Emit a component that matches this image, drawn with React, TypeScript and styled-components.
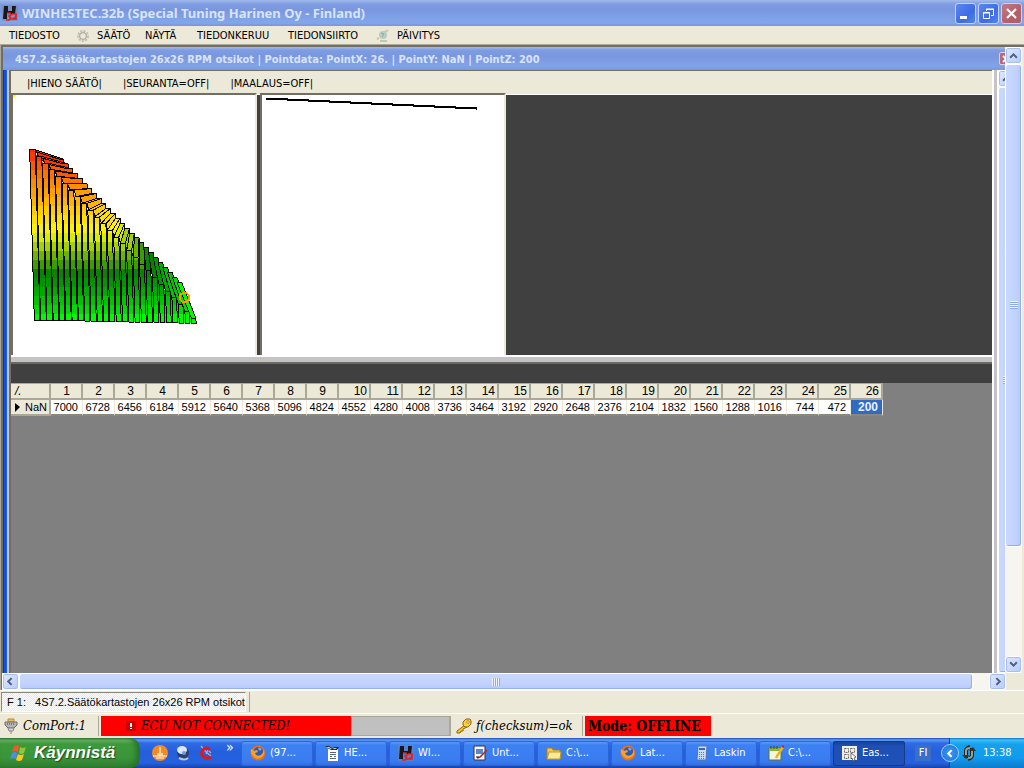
import React from "react";
import styled, { createGlobalStyle, css } from "styled-components";

const tahoma = `"DejaVu Sans Condensed", "DejaVu Sans", sans-serif`;
const trebuchet = `"Noto Sans", "Open Sans", sans-serif`;
const georgia = `"DejaVu Serif Condensed", "DejaVu Serif", serif`;
const arial = `"Liberation Sans", Arial, sans-serif`;

const face = "#ece9d8";
const shade = "#aca899";
const darkShade = "#716f64";

const GlobalStyle = createGlobalStyle`
  *, *::before, *::after { box-sizing: border-box; }
  body { margin: 0; background: ${face}; font: 11px/14px ${tahoma}; color: #000; }
  button { margin: 0; padding: 0; border: 0; background: none; font: inherit; color: inherit; }
  svg { display: block; flex: none; }
`;

const Screen = styled.div`
  display: flex;
  flex-direction: column;
  min-height: 100vh;
  overflow: hidden;
`;

const TitleBar = styled.header`
  display: flex;
  align-items: center;
  gap: 2px;
  height: 26px;
  padding: 0 2px;
  background: linear-gradient(#a2bbec 0, #7f9de2 4px, #7a96df 10px, #80a4e8 20px, #83a6ea 23px, #7b92dc 100%);
`;

const AppTitle = styled.h1`
  flex: 1;
  margin: 0 0 0 2px;
  font: bold 13px/20px ${trebuchet};
  color: #d8e4f8;
  white-space: nowrap;
`;

const CaptionButton = styled.button<{ $danger?: boolean }>`
  display: flex;
  align-items: center;
  justify-content: center;
  width: 21px;
  height: 21px;
  border: 1px solid #c3d2f6;
  border-radius: 3px;
  background: ${(p) =>
    p.$danger
      ? "linear-gradient(135deg, #c07a86, #b3606a 60%, #a8626e)"
      : "linear-gradient(135deg, #5d87f0, #3d6be4 60%, #4f86ef)"};
`;

const MenuBar = styled.nav`
  display: flex;
  align-items: center;
  height: 18px;
  padding: 1px 0 0 3px;
`;

const MenuItem = styled.button<{ $width: number }>`
  display: flex;
  align-items: center;
  gap: 7px;
  width: ${(p) => p.$width}px;
  padding-left: 6px;
  white-space: nowrap;
`;

const Workspace = styled.main`
  flex: 1;
  display: flex;
  flex-direction: column;
  padding-right: 2px;
  border-top: 1px solid ${shade};
  border-left: 1px solid ${shade};
  box-shadow: inset 2px 2px 0 ${darkShade};
`;

const WorkspaceRow = styled.div`
  flex: 1;
  display: flex;
  padding: 2px 0 0 2px;
`;

const ChildWindow = styled.section`
  flex: 1;
  min-width: 0;
  display: flex;
  flex-direction: column;
`;

const ChildTitle = styled.div`
  display: flex;
  align-items: center;
  justify-content: space-between;
  height: 23px;
  padding-left: 12px;
  overflow: hidden;
  background: linear-gradient(#a2bbec 0, #7f9de2 3px, #7a96df 9px, #80a4e8 19px, #7b96df 100%);
`;

const ChildName = styled.h2`
  margin: 0;
  padding-top: 2px;
  font: bold 11px/18px ${tahoma};
  color: #d8e4f8;
  white-space: nowrap;
`;

const ChildCloseSlot = styled.div`
  width: 6px;
  height: 13px;
  overflow: hidden;
`;

const ChildClose = styled.button`
  display: flex;
  align-items: center;
  width: 13px;
  height: 13px;
  padding-left: 2px;
  border: 1px solid #dfd0e0;
  border-radius: 2px;
  background: #b86a7a;
`;

const ChildFrame = styled.div`
  flex: 1;
  display: flex;
  padding-left: 6px;
  background: linear-gradient(90deg, #0a2fc8 0 1px, #0a50ee 1px 3px, #1c5ce0 3px 4px, #c8c6bc 4px 6px, transparent 6px);
`;

const ChildBody = styled.div`
  flex: 1;
  min-width: 0;
  display: flex;
  flex-direction: column;
  border-left: 2px solid ${darkShade};
  border-top: 1px solid ${darkShade};
`;

const Gutter = styled.div`
  width: 6px;
  background: #c4c4c4;
  border-left: 2px solid #fff;
  border-right: 1px solid #fff;
`;

const ClippedScroll = styled.div`
  display: flex;
  width: 7px;
  overflow: hidden;
`;

const ToolStrip = styled.div`
  display: flex;
  gap: 21px;
  height: 22px;
  padding: 3px 0 0 16px;
  align-items: center;
  white-space: nowrap;
`;

const Views = styled.div`
  display: flex;
  gap: 3px;
  height: 264px;
  background: linear-gradient(${face} 0 1px, #fff 1px 2px, #404040 2px);
  border-bottom: 2px solid #fff;
`;

const View = styled.div`
  width: 246px;
  overflow: hidden;
  background: #fff;
  border: 2px solid ${darkShade};
  border-right-color: ${face};
  border-bottom: 0;
`;

const Splitter = styled.div`
  height: 5px;
  background: #c4c4c4;
`;

const DarkBand = styled.div`
  height: 21px;
  background: #404040;
  border-top: 2px solid #6c6a60;
`;

const GridArea = styled.div`
  flex: 1;
  background: #808080;
`;

const Grid = styled.table`
  border-collapse: separate;
  border-spacing: 0;
  table-layout: fixed;
  width: 872px;
  font: 11px/14px ${arial};
`;

const HeadCell = styled.th<{ $first?: boolean }>`
  width: ${(p) => (p.$first ? 40 : 32)}px;
  height: 17px;
  padding: 0 2px 0 0;
  font-weight: normal;
  font-size: 12px;
  line-height: 14px;
  text-align: ${(p) => (p.$first ? "left" : "right")};
  ${(p) => p.$first && css`padding-left: 4px; font-style: italic;`}
  background: ${face};
  border: solid ${shade};
  border-width: 1px 2px 2px 0;
`;

const HeadNumber = styled.span<{ $single: boolean }>`
  padding-right: ${(p) => (p.$single ? 9 : 0)}px;
`;

const RowHead = styled.th`
  height: 16px;
  padding: 0 2px 0 3px;
  font-weight: normal;
  background: ${face};
  border-right: 2px solid ${shade};
  border-bottom: 2px solid ${shade};
`;

const RowHeadInner = styled.div`
  display: flex;
  align-items: center;
  justify-content: space-between;
`;

const Cell = styled.td<{ $selected?: boolean }>`
  height: 16px;
  padding: 0 4px 0 0;
  text-align: right;
  background: #fff;
  border-right: 1px solid ${face};
  border-bottom: 2px solid #8a887c;
  ${(p) =>
    p.$selected &&
    css`
      font-size: 12px;
      font-weight: bold;
      color: #e8f0ff;
      background: #316ac5;
    `}
`;

const ScrollTrack = styled.div<{ $horizontal?: boolean }>`
  display: flex;
  flex: none;
  flex-direction: ${(p) => (p.$horizontal ? "row" : "column")};
  ${(p) => (p.$horizontal ? "height: 17px; flex: 1;" : "width: 17px;")}
  background: #f6f5f0;
`;

const ScrollButton = styled.button`
  display: flex;
  flex: none;
  align-items: center;
  justify-content: center;
  width: 17px;
  height: 17px;
  border: 1px solid #fff;
  border-radius: 3px;
  box-shadow: inset 0 0 0 1px #a9bef0;
  background: linear-gradient(135deg, #dfe9ff, #b6cafb);
`;

const ScrollThumb = styled.div<{ $horizontal?: boolean; $share: number }>`
  display: flex;
  align-items: center;
  justify-content: center;
  flex: ${(p) => p.$share} 1 0px;
  border: 1px solid #fff;
  border-radius: 3px;
  box-shadow: inset -1px -1px 0 #98b0e8;
  background: linear-gradient(${(p) => (p.$horizontal ? "180deg" : "90deg")}, #cad8fe, #c2d3fd 60%, #b6cafa);
`;

const ScrollRest = styled.div<{ $share: number }>`
  flex: ${(p) => p.$share} 1 0px;
`;

const Grip = styled.span<{ $horizontal?: boolean }>`
  width: 8px;
  height: 8px;
  background: repeating-linear-gradient(
    ${(p) => (p.$horizontal ? "90deg" : "180deg")},
    #eef3ff 0 1px,
    #8cacec 1px 2px
  );
`;

const BottomScroll = styled.div`
  display: flex;
  padding: 0 0 0 1px;
`;

const Corner = styled.div`
  width: 16px;
  height: 17px;
`;

const TabStrip = styled.div`
  display: flex;
  height: 23px;
  padding: 1px 0 1px 1px;
  border-top: 1px solid #fff;
`;

const DocTab = styled.button`
  padding: 0 0 0 5px;
  border: 1px solid #8a887c;
  border-color: #8a887c #fff #fff #8a887c;
  background: repeating-conic-gradient(#fff 0 25%, ${face} 0 50%) 0 0 / 2px 2px;
  font: 11px/18px ${arial};
  white-space: pre;
`;

const TabDivider = styled.span`
  width: 1px;
  margin-left: 3px;
  background: ${shade};
`;

const StatusBar = styled.footer`
  display: flex;
  height: 25px;
  padding: 2px 0;
  border-top: 1px solid #fff;
  font: italic 13px/20px ${georgia};
  white-space: nowrap;
`;

const StatusPart = styled.div<{ $width: number; $tone?: "alert" | "idle"; $bold?: boolean }>`
  display: flex;
  align-items: center;
  gap: 4px;
  width: ${(p) => p.$width}px;
  height: 20px;
  padding-left: 3px;
  overflow: hidden;
  ${(p) => p.$tone === "alert" && css`background: #f00;`}
  ${(p) => p.$tone === "idle" && css`background: #c0c0c0; border: 1px solid ${shade};`}
  ${(p) => p.$bold && css`font-weight: bold; font-style: normal; font-size: 14px;`}
`;

const AlertPart = styled(StatusPart)`
  padding-left: 24px;
`;

const StatusDivider = styled.span`
  width: 3px;
  border-left: 1px solid ${shade};
`;

const TaskBar = styled.div`
  display: flex;
  align-items: stretch;
  height: 30px;
  color: #fff;
  background: linear-gradient(#1f48b4 0, #5a9cf5 2px, #2f6be6 5px, #245edb 14px, #2562e0 25px, #1941a5 100%);
`;

const StartButton = styled.button`
  display: flex;
  align-items: center;
  gap: 6px;
  width: 140px;
  padding-left: 10px;
  border-radius: 0 10px 10px 0;
  background: linear-gradient(#2f7a2d 0, #6cb56a 2px, #3c9a3b 6px, #3a943a 20px, #2f7d2f 100%);
  box-shadow: inset -4px 0 5px #2a702a;
  font: italic bold 17px/24px ${arial};
  text-shadow: 1px 1px 1px #1c4a1c;
`;

const QuickLaunch = styled.div`
  display: flex;
  align-items: center;
  gap: 7px;
  width: 101px;
  padding-left: 12px;
`;

const Chevrons = styled.span`
  align-self: flex-start;
  margin-left: 5px;
  font-size: 14px;
  line-height: 18px;
`;

const Tasks = styled.div`
  flex: 1;
  display: flex;
  align-items: center;
  gap: 2px;
`;

const TaskButton = styled.button<{ $active?: boolean }>`
  display: flex;
  align-items: center;
  gap: 4px;
  flex: 0 1 72px;
  height: 25px;
  padding-left: 9px;
  border-radius: 3px;
  white-space: nowrap;
  background: ${(p) =>
    p.$active
      ? "linear-gradient(#163e8f, #1d4fb5 5px, #1e52b7)"
      : "linear-gradient(#6aa2fa, #3c81f3 4px, #3a7cf0 20px, #2f6ce0)"};
  box-shadow: inset 0 0 0 1px ${(p) => (p.$active ? "#16398a" : "#2c63d8")};
`;

const Language = styled.button`
  align-self: center;
  width: 16px;
  height: 16px;
  margin-right: 18px;
  background: #3a6fc8;
  text-align: center;
`;

const Tray = styled.div`
  display: flex;
  align-items: center;
  gap: 2px;
  width: 75px;
  background: linear-gradient(#0f72c4 0, #3cc0fa 2px, #16a0ee 6px, #109bec 20px, #0e78c8 100%);
  border-left: 1px solid #0b4a9c;
`;

const Clock = styled.span`
  margin-left: 4px;
`;

const TrayToggle = styled.button`
  display: flex;
  align-items: center;
  justify-content: center;
  width: 18px;
  height: 18px;
  margin-left: -9px;
  border: 1px solid #9fd2fb;
  border-radius: 9px;
  background: radial-gradient(#3b9cf5, #1a6fe0);
`;

const values = Array.from({ length: 26 }, (_, i) => 7000 - 272 * i);

const bands = [
  "#ff2a00", "#ff3a00", "#ff5800", "#ff7400", "#ff8c00", "#ffa000", "#ffb400", "#ffcc00", "#ffe000", "#fff200",
  "#d8ec00", "#a4d200", "#6cb400", "#3c9c00", "#088400", "#009600", "#00aa00", "#00c400", "#00dc00", "#00fa00",
];
const bandTop = 160;
const bandHeight = 27;
const bandAt = (y: number) =>
  bands[Math.max(0, Math.min(bands.length - 1, Math.floor((y - bandTop) / bandHeight)))];

/* Perspective columns: each has a front face and a lid running to the back edge. */
function SurfaceChart() {
  const bars = values.map((_, i) => {
    const x = 89 + i * 19.4;
    const y = 179 + i * 20.2;
    const w = 17 - i * 0.15;
    const bx = 103 + i * 18.9;
    const by = 690 + i * 0.4;
    const backX = 190 + i * 14.2;
    const backY = 207 + i * 14.8;
    const side = backX > bx + w ? `L${backX} ${backY + 14}` : "";
    /* strip of the side face that shows before the next column starts */
    const edge = i < values.length - 1 ? 4 : 0;
    return { x, y, w, bx, by, backX, backY, side, edge };
  });
  return (
    <svg width="243" height="260" viewBox="39 15 729 780" role="img" aria-label="3D map" shapeRendering="crispEdges">
      <defs>
        <linearGradient id="heat" gradientUnits="userSpaceOnUse" x1="0" x2="0" y1={bandTop} y2={bandTop + bandHeight * bands.length}>
          {bands.flatMap((c, i) => [
            <stop key={`a${i}`} offset={i / bands.length} stopColor={c} />,
            <stop key={`b${i}`} offset={(i + 1) / bands.length} stopColor={c} />,
          ])}
        </linearGradient>
      </defs>
      <path d="M39 15h9l-3 6h-6z" fill="#ff0" />
      <g stroke="#000" strokeWidth="3" strokeLinejoin="round">
        {bars.map((b, i) => (
          <g key={i}>
            <path
              d={`M${b.x + b.w} ${b.y}L${b.backX} ${b.backY}${b.side}L${b.bx + b.w} ${b.side ? b.y + 30 : b.by}Z`}
              fill={bandAt(b.y)}
            />
            <path
              d={`M${b.x + b.w - 2} ${b.y + 16}h${b.edge + 2}L${b.bx + b.w + b.edge} ${b.by}h${-b.edge - 2}Z`}
              fill="url(#heat)"
              stroke="none"
            />
            <path
              d={`M${b.x} ${b.y}L${b.backX - 14} ${b.backY}L${b.backX} ${b.backY}L${b.x + b.w} ${b.y}Z`}
              fill={bandAt(b.y)}
            />
            <path d={`M${b.x} ${b.y}h${b.w}L${b.bx + b.w} ${b.by}H${b.bx}Z`} fill="url(#heat)" />
          </g>
        ))}
      </g>
      <circle cx="553" cy="622" r="14" fill="none" stroke="#ff9a00" strokeWidth="6" />
    </svg>
  );
}

function LineChart() {
  const steps = Array.from({ length: 10 }, (_, i) => i);
  return (
    <svg width="242" height="260" viewBox="0 0 242 260" role="img" aria-label="2D curve" shapeRendering="crispEdges">
      {steps.map((i) => (
        <rect key={i} x={4 + i * 21} y={3 + i} width="22" height="2" />
      ))}
      <path d="M214 12h1v3h-1z" />
    </svg>
  );
}

const AppIcon = () => (
  <svg width="16" height="16" viewBox="0 0 16 16">
    <path d="M0 0h16v16H0z" fill="#7c8498" opacity=".45" />
    <path d="M1 14 2 1h4v5h4V1h4l-1 8H9V8H5v6z" fill="#18181c" />
    <path d="M5 8h3l1 2-2 1 2 2-2 2H4M10 9h4v3l-3 2h4" fill="none" stroke="#e81c1c" strokeWidth="1.7" />
  </svg>
);
const GearIcon = () => (
  <svg width="14" height="14" viewBox="0 0 14 14">
    <circle cx="7" cy="7" r="4.5" fill="none" stroke="#c4c1b8" strokeWidth="3" strokeDasharray="2 1" />
    <circle cx="7" cy="7" r="3.4" fill="none" stroke="#aaa79c" />
  </svg>
);
const UpdateIcon = () => (
  <svg width="14" height="14" viewBox="0 0 14 14">
    <circle cx="7" cy="6" r="4" fill="#b8ccc4" />
    <path d="m9 3 3-2M3 9l-2 1M4 12h7" stroke="#c8c5a8" strokeWidth="2" />
    <path d="M5 4l3 1-2 3" fill="none" stroke="#84b0a0" />
  </svg>
);
const PlugIcon = () => (
  <svg width="16" height="16" viewBox="0 0 16 16">
    <path d="M5 1h6v3H5z" fill="#e8c060" stroke="#c88820" />
    <path d="M2 4h12v3l-3 3H5L2 7z" fill="#b4b4b4" stroke="#6c6c6c" />
    <path d="M5 10h6l-1 3H6zM8 13v3" fill="#d0d0d0" stroke="#888" />
    <path d="M4 6h8" stroke="#444" strokeDasharray="1 1" />
  </svg>
);
const AlertIcon = () => (
  <svg width="12" height="12" viewBox="0 0 12 12">
    <rect x="1" y="1" width="10" height="10" rx="2" fill="#c80000" />
    <path d="M5 3h2v4H5zM5 8h2v1H5z" fill="#fff" />
  </svg>
);
const KeyIcon = () => (
  <svg width="16" height="16" viewBox="0 0 16 16">
    <path d="M9 7 1 13v2h3v-1h1v-1h2v-2l4-2" fill="#f8c828" stroke="#94620c" />
    <path d="M7 4 10 1h4l1 2v3l-3 3-3 0-2-2z" fill="#fbd038" stroke="#94620c" />
    <circle cx="12" cy="4" r="1.3" fill="#fff" stroke="#94620c" strokeWidth=".7" />
  </svg>
);
const FlagIcon = () => (
  <svg width="18" height="18" viewBox="0 0 18 18">
    <path d="M4 2q3-2 5 0L8 8Q5 6 2 8z" fill="#ee5a28" />
    <path d="M10 3q3 2 6 0l-2 6q-3 2-5 0z" fill="#8cc83c" />
    <path d="M2 9q3-2 5 0l-1 6q-3-2-6 0z" fill="#4c8ef0" />
    <path d="M8 10q3 2 6 0l-2 6q-3 2-6 0z" fill="#fcc81c" />
  </svg>
);
const SunIcon = () => (
  <svg width="16" height="16" viewBox="0 0 16 16">
    <circle cx="8" cy="8" r="8" fill="#f48a20" />
    <path d="M8 2v9M1 11h14M4 13h8M6 8v3M10 8v3" stroke="#fff" strokeWidth="1.2" />
  </svg>
);
const MouseIcon = () => (
  <svg width="16" height="16" viewBox="0 0 16 16">
    <circle cx="8" cy="8" r="6" fill="#28426c" />
    <ellipse cx="7" cy="5" rx="5" ry="4" fill="#dce6f4" />
    <path d="M4 13q6 3 9 0" fill="none" stroke="#b8c4dc" strokeWidth="2" />
    <circle cx="9" cy="8" r="2" fill="#7898d8" />
  </svg>
);
const RedCIcon = () => (
  <svg width="16" height="16" viewBox="0 0 16 16">
    <path d="M3 1l5 6 5 4M8 9l2-4 3 3" fill="none" stroke="#a8b0cc" strokeWidth="1.2" />
    <path d="M12 5Q8 1 5 5t0 6q3 4 8 1" fill="none" stroke="#e01818" strokeWidth="3" />
  </svg>
);
const FirefoxIcon = () => (
  <svg width="16" height="16" viewBox="0 0 16 16">
    <circle cx="8" cy="8" r="7.5" fill="#e8701a" />
    <circle cx="8.5" cy="6.5" r="4.6" fill="#2c5cb0" />
    <path d="M1 4l3 2 3-1 1 2-3 1q1 4 6 2 3-2 2-6 3 5-1 8-5 4-9-1Q0 8 1 4z" fill="#f8a028" />
    <path d="M9 2l3 2-2 2-2-2z" fill="#78a8e8" />
  </svg>
);
const WriterIcon = () => (
  <svg width="16" height="16" viewBox="0 0 16 16">
    <path d="M4 4h10v12H4z" fill="#fff" />
    <path d="M1 1h4l3 2 3-1h4l-2 3H7z" fill="#282c34" />
    <path d="M2 2h3l3 2 3-1h2l-2 1H7z" fill="#e8ecf4" />
    <path d="M6 7.500h6M6 9.500h6M6 11.500h2M10 11.500h2M6 13.500h6" stroke="#5a6478" />
  </svg>
);
const PaintIcon = () => (
  <svg width="16" height="16" viewBox="0 0 16 16">
    <path d="M2 1h11v14H2z" fill="#f8f8ff" stroke="#334" />
    <path d="M4 4h7v5H4z" fill="#5c88c8" />
    <path d="M15 5 8 12l-3 1" fill="none" stroke="#b02828" strokeWidth="1.5" />
    <path d="M4 12h3" stroke="#222" />
  </svg>
);
const FolderIcon = () => (
  <svg width="16" height="16" viewBox="0 0 16 16">
    <path d="M1 3h5l1 2h7v9H1z" fill="#f0c850" stroke="#a88018" />
    <path d="M3 7h12l-1 7H1z" fill="#fdea98" stroke="#c09828" />
  </svg>
);
const CalcIcon = () => (
  <svg width="16" height="16" viewBox="0 0 16 16">
    <path d="M4 1h9l-1 14H3z" fill="#c8dcf4" stroke="#5474ac" />
    <path d="M5 3h6v2H5z" fill="#3868b8" />
    <path d="M5 7.500h6M5 9.500h6M5 11.500h6M5 13.500h6" stroke="#5478b8" strokeDasharray="1 1" />
  </svg>
);
const NoteIcon = () => (
  <svg width="16" height="16" viewBox="0 0 16 16">
    <path d="M1 3h12v12H1z" fill="#f4f8d8" stroke="#5c7428" />
    <path d="M1 3h12v3H1z" fill="#88b838" />
    <path d="M3 1v3M6 1v3M9 1v3" stroke="#444" />
    <path d="m15 2-6 9-1 2" stroke="#f0b020" strokeWidth="2.4" />
    <path d="m14 1 2 1" stroke="#d02020" strokeWidth="2" />
  </svg>
);
const GridIcon = () => (
  <svg width="16" height="16" viewBox="0 0 16 16">
    <path d="M0 1h15v14H0z" fill="#f0eee8" />
    <path d="M2.500 3.500h4v4h-4zM8.500 3.500h4v4h-4zM2.500 9.500h4v4h-4z" fill="none" stroke="#666" strokeDasharray="2 1" />
    <path d="m9 8 5 4-2 1 1 2-2 1-1-3-1 1z" fill="#fff" stroke="#333" strokeWidth=".7" />
  </svg>
);
const SyncIcon = () => (
  <svg width="16" height="16" viewBox="0 0 16 16">
    <path d="M5 13V6q0-3 4-4M11 3v7q0 3-4 4" fill="none" stroke="#28241e" strokeWidth="4" />
    <path d="M5 12V6q0-3 4-3M11 4v6q0 3-4 3" fill="none" stroke="#a09c90" strokeWidth="2" />
    <path d="M1 10h7l-3 4zM8 6h7l-3-4z" fill="#38342c" />
  </svg>
);

type Dir = "up" | "down" | "left" | "right";
const arrowPaths: Record<Dir, string> = {
  up: "M1 6l3-3 3 3",
  down: "M1 2l3 3 3-3",
  left: "M5 1L2 4l3 3",
  right: "M3 1l3 3-3 3",
};
const Arrow = ({ dir, color = "#4d6185" }: { dir: Dir; color?: string }) => (
  <svg width="9" height="9" viewBox="0 0 8 8">
    <path d={arrowPaths[dir]} fill="none" stroke={color} strokeWidth="1.8" />
  </svg>
);

const menu: { label: string; width: number; icon?: React.ReactNode }[] = [
  { label: "TIEDOSTO", width: 67 },
  { label: "SÄÄTÖ", width: 69, icon: <GearIcon /> },
  { label: "NÄYTÄ", width: 52 },
  { label: "TIEDONKERUU", width: 91 },
  { label: "TIEDONSIIRTO", width: 88 },
  { label: "PÄIVITYS", width: 80, icon: <UpdateIcon /> },
];

const tasks: { label: string; icon: React.ReactNode; active?: boolean }[] = [
  { label: "(97...", icon: <FirefoxIcon /> },
  { label: "HE...", icon: <WriterIcon /> },
  { label: "WI...", icon: <AppIcon /> },
  { label: "Unt...", icon: <PaintIcon /> },
  { label: "C:\\...", icon: <FolderIcon /> },
  { label: "Lat...", icon: <FirefoxIcon /> },
  { label: "Laskin", icon: <CalcIcon /> },
  { label: "C:\\...", icon: <NoteIcon /> },
  { label: "Eas...", icon: <GridIcon />, active: true },
];

export default function App() {
  return (
    <Screen>
      <GlobalStyle />
      <TitleBar>
        <AppIcon />
        <AppTitle>WINHESTEC.32b (Special Tuning Harinen Oy - Finland)</AppTitle>
        <CaptionButton aria-label="Minimize">
          <svg width="13" height="13"><path d="M1 9h7v3H1z" fill="#fff" /></svg>
        </CaptionButton>
        <CaptionButton aria-label="Restore">
          <svg width="13" height="13" fill="none" stroke="#fff">
            <path d="M4.500 4V2.500h7v6H9M4 2h8" />
            <path d="M1.500 5.500h6v6h-6zM1 6h7" />
          </svg>
        </CaptionButton>
        <CaptionButton aria-label="Close" $danger>
          <svg width="13" height="13"><path d="m2 2 9 9M11 2l-9 9" stroke="#fff" strokeWidth="2.200" /></svg>
        </CaptionButton>
      </TitleBar>

      <MenuBar>
        {menu.map((m) => (
          <MenuItem key={m.label} $width={m.width}>
            {m.icon}
            {m.label}
          </MenuItem>
        ))}
      </MenuBar>

      <Workspace>
        <WorkspaceRow>
          <ChildWindow>
            <ChildTitle>
              <ChildName>
                4S7.2.Säätökartastojen 26x26 RPM otsikot | Pointdata: PointX: 26. | PointY: NaN | PointZ: 200
              </ChildName>
              <ChildCloseSlot>
                <ChildClose aria-label="Close map">
                  <svg width="8" height="8"><path d="m1 1 6 6M7 1 1 7" stroke="#fff" strokeWidth="1.800" /></svg>
                </ChildClose>
              </ChildCloseSlot>
            </ChildTitle>
            <ChildFrame>
              <ChildBody>
                <ToolStrip>
                  <button>|HIENO SÄÄTÖ|</button>
                  <button>|SEURANTA=OFF|</button>
                  <button>|MAALAUS=OFF|</button>
                </ToolStrip>
                <Views>
                  <View><SurfaceChart /></View>
                  <View><LineChart /></View>
                </Views>
                <Splitter />
                <DarkBand />
                <GridArea>
                  <Grid>
                    <thead>
                      <tr>
                        <HeadCell $first scope="col">/.</HeadCell>
                        {values.map((_, i) => (
                          <HeadCell key={i} scope="col">
                            <HeadNumber $single={i < 9}>{i + 1}</HeadNumber>
                          </HeadCell>
                        ))}
                      </tr>
                    </thead>
                    <tbody>
                      <tr>
                        <RowHead scope="row">
                          <RowHeadInner>
                            <svg width="6" height="9"><path d="M1 0l5 4-5 5z" /></svg>
                            NaN
                          </RowHeadInner>
                        </RowHead>
                        {values.map((v, i) => (
                          <Cell key={v} $selected={i === 25}>{v}</Cell>
                        ))}
                      </tr>
                    </tbody>
                  </Grid>
                </GridArea>
              </ChildBody>
              <Gutter />
              <ClippedScroll>
                <ScrollTrack>
                  <ScrollButton aria-label="Scroll map up"><Arrow dir="up" /></ScrollButton>
                  <ScrollThumb $share={1}><Grip /></ScrollThumb>
                </ScrollTrack>
              </ClippedScroll>
            </ChildFrame>
          </ChildWindow>
          <ScrollTrack>
            <ScrollButton aria-label="Scroll up"><Arrow dir="up" /></ScrollButton>
            <ScrollThumb $share={483}><Grip /></ScrollThumb>
            <ScrollRest $share={110} />
            <ScrollButton aria-label="Scroll down"><Arrow dir="down" /></ScrollButton>
          </ScrollTrack>
        </WorkspaceRow>
        <BottomScroll>
          <ScrollTrack $horizontal>
            <ScrollButton aria-label="Scroll left"><Arrow dir="left" /></ScrollButton>
            <ScrollThumb $horizontal $share={953}><Grip $horizontal /></ScrollThumb>
            <ScrollRest $share={16} />
            <ScrollButton aria-label="Scroll right"><Arrow dir="right" /></ScrollButton>
          </ScrollTrack>
          <Corner />
        </BottomScroll>
      </Workspace>

      <TabStrip>
        <DocTab>{"F 1:   4S7.2.Säätökartastojen 26x26 RPM otsikot"}</DocTab>
        <TabDivider />
      </TabStrip>

      <StatusBar>
        <StatusPart $width={98}><PlugIcon />ComPort:1</StatusPart>
        <StatusDivider />
        <AlertPart $width={250} $tone="alert"><AlertIcon />ECU NOT CONNECTED!</AlertPart>
        <StatusPart $width={99} $tone="idle" />
        <StatusDivider />
        <StatusPart $width={129}><KeyIcon />ƒ(checksum)=ok</StatusPart>
        <StatusDivider />
        <StatusPart $width={126} $tone="alert" $bold>Mode: OFFLINE</StatusPart>
      </StatusBar>

      <TaskBar>
        <StartButton><FlagIcon />Käynnistä</StartButton>
        <QuickLaunch>
          <SunIcon />
          <MouseIcon />
          <RedCIcon />
          <Chevrons>»</Chevrons>
        </QuickLaunch>
        <Tasks>
          {tasks.map((t, i) => (
            <TaskButton key={i} $active={t.active}>
              {t.icon}
              {t.label}
            </TaskButton>
          ))}
        </Tasks>
        <Language>FI</Language>
        <Tray>
          <TrayToggle aria-label="Show hidden icons"><Arrow dir="left" color="#fff" /></TrayToggle>
          <SyncIcon />
          <Clock>13:38</Clock>
        </Tray>
      </TaskBar>
    </Screen>
  );
}
